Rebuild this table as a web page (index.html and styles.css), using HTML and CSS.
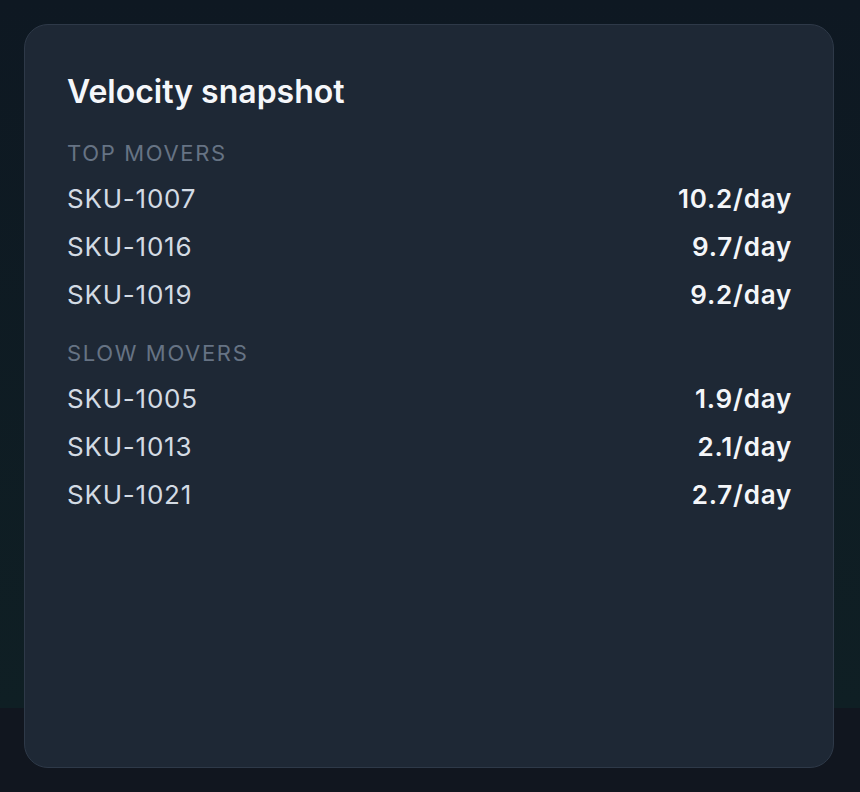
FILE: index.html
```html
<!DOCTYPE html>
<html lang="en">
<head>
<meta charset="utf-8">
<title>Velocity snapshot</title>
<link rel="stylesheet" href="styles.css">
</head>
<body>
<main class="card">
  <h2 class="title">Velocity snapshot</h2>
  <section class="group">
    <h3 class="label">Top movers</h3>
    <ul class="rows">
      <li class="row"><span class="sku">SKU-1007</span><span class="rate">10.2/day</span></li>
      <li class="row"><span class="sku">SKU-1016</span><span class="rate">9.7/day</span></li>
      <li class="row"><span class="sku">SKU-1019</span><span class="rate">9.2/day</span></li>
    </ul>
  </section>
  <section class="group">
    <h3 class="label">Slow movers</h3>
    <ul class="rows">
      <li class="row"><span class="sku">SKU-1005</span><span class="rate">1.9/day</span></li>
      <li class="row"><span class="sku">SKU-1013</span><span class="rate">2.1/day</span></li>
      <li class="row"><span class="sku">SKU-1021</span><span class="rate">2.7/day</span></li>
    </ul>
  </section>
</main>
</body>
</html>
```
FILE: styles.css
```css
* { box-sizing: border-box; }
html, body { height: 100%; }
body {
  margin: 0;
  padding: 24px 26px 24px 24px;
  font-family: Inter, "Noto Sans", sans-serif;
  background-color: #11161f;
  background-image: linear-gradient(180deg, #0e1822 0%, #0f1f24 100%);
  background-size: 100% 708px;
  background-repeat: no-repeat;
}
.card {
  height: 100%;
  border: 1px solid #2e3948;
  border-radius: 24px;
  background: #1e2835;
  padding: 47px 41px 0 42px;
}
.title {
  margin: 0;
  font-size: 32px;
  line-height: 40px;
  font-weight: 600;
  color: #f5f7fa;
}
.group { margin-top: 27px; }
.group + .group { margin-top: 21px; }
.label {
  margin: 0;
  font-size: 22px;
  line-height: 28px;
  font-weight: 400;
  letter-spacing: 0.075em;
  text-transform: uppercase;
  color: #667384;
}
.rows { list-style: none; margin: 7px 0 0; padding: 0; }
.row {
  display: flex;
  justify-content: space-between;
  align-items: center;
  height: 48px;
  font-size: 26px;
  letter-spacing: 0.03em;
}
.sku { color: #d3dbe4; }
.rate { color: #f4f6f9; font-weight: 600; }
```
